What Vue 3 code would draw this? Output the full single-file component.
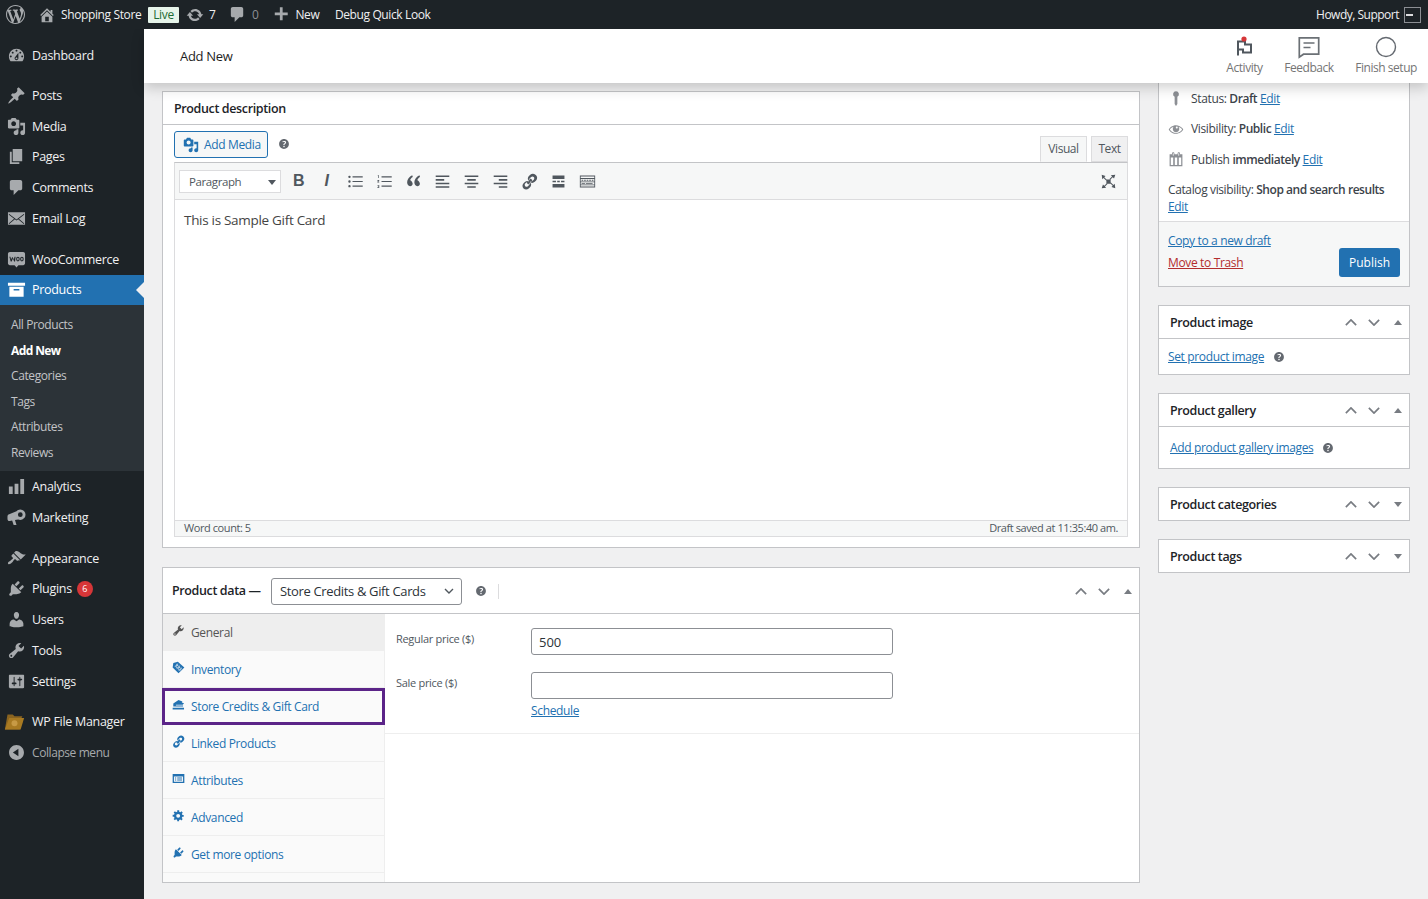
<template>
  <div class="page">
    <!-- Thanh admin trên cùng -->
    <header class="adminbar">
      <svg class="ab-wp" viewBox="0 0 20 20"><path :d="icons.wordpress" /></svg>
      <svg class="ab-home" viewBox="0 0 20 20"><path :d="icons.home" /></svg>
      <span class="ab-site">Shopping Store</span>
      <span class="ab-live">Live</span>
      <svg class="ab-update" viewBox="0 0 20 20"><path :d="icons.update" /></svg>
      <span class="ab-count">7</span>
      <svg class="ab-comment" viewBox="0 0 20 20"><path :d="icons.comments" /></svg>
      <span class="ab-zero">0</span>
      <svg class="ab-plus" viewBox="0 0 20 20"><path :d="icons.plus" /></svg>
      <span class="ab-new">New</span>
      <span class="ab-debug">Debug Quick Look</span>
      <span class="ab-howdy">Howdy, Support</span>
      <span class="ab-avatar"><i></i></span>
    </header>

    <div class="body-row">
      <!-- Menu bên trái -->
      <aside class="sidebar">
        <template v-for="item in menu" :key="item.label">
          <a class="menu-item" :class="[item.cls, { current: item.current, muted: item.muted }]">
            <span class="menu-icon">
              <svg v-if="item.icon" viewBox="0 0 20 20"><path :d="icons[item.icon]" fill-rule="evenodd" /></svg>
              <svg v-else class="folder" viewBox="0 0 24 20">
                <path d="M4 2h6l2 2h9l-1 2H22l-4 13H1z" fill="#8a6420" />
                <path d="M6 6h17l-4 13H1z" fill="#a87a22" />
                <circle cx="12" cy="12" r="3.4" fill="#c79a45" />
              </svg>
            </span>
            <span class="menu-label">{{ item.label }}</span>
            <span v-if="item.badge" class="menu-badge">{{ item.badge }}</span>
          </a>
          <ul v-if="item.current" class="submenu">
            <li v-for="sub in submenu" :key="sub" :class="{ active: sub === 'Add New' }">{{ sub }}</li>
          </ul>
        </template>
      </aside>

      <div class="main">
        <!-- Header trang -->
        <div class="wc-header">
          <span class="wc-title">Add New</span>
          <div class="wc-actions">
            <div class="wc-action activity">
              <svg viewBox="0 0 24 24">
                <path d="M6 20.500V6.500h7v3h6v8h-8v-3H7" fill="none" stroke="#50575e" stroke-width="2" />
                <circle cx="12" cy="4" r="2.600" fill="#d63638" />
              </svg>
              <span>Activity</span>
            </div>
            <div class="wc-action feedback">
              <svg viewBox="0 0 24 24">
                <path d="M2.300 2.800h19.400v16.400H6.500l-4.200 3z" fill="none" stroke="#6b7075" stroke-width="1.700" />
                <path d="M6.500 8h11M6.500 12.500h7" stroke="#6b7075" stroke-width="1.700" />
              </svg>
              <span>Feedback</span>
            </div>
            <div class="wc-action setup">
              <svg viewBox="0 0 24 24"><circle cx="12" cy="12" r="9.500" fill="none" stroke="#646970" stroke-width="1.400" /></svg>
              <span>Finish setup</span>
            </div>
          </div>
        </div>

        <div class="columns">
          <div class="col-left">
            <!-- Mô tả sản phẩm -->
            <section class="postbox description">
              <h2 class="box-title">Product description</h2>
              <div class="editor-wrap">
                <div class="media-row">
                  <button class="add-media">
                    <svg viewBox="0 0 20 20"><path :d="icons.media" /></svg>
                    Add Media
                  </button>
                  <svg class="help" viewBox="0 0 20 20"><path :d="icons.help" /></svg>
                  <div class="editor-tabs">
                    <span class="tab on">Visual</span>
                    <span class="tab text-tab">Text</span>
                  </div>
                </div>
                <div class="editor">
                  <div class="toolbar">
                    <div class="format-select">Paragraph<i class="caret"></i></div>
                    <span class="tb-btn tb-b">B</span>
                    <span class="tb-btn tb-i">I</span>
                    <span v-for="t in toolbarIcons" :key="t" class="tb-btn">
                      <svg viewBox="0 0 20 20"><path :d="tools[t]" fill-rule="evenodd" /></svg>
                    </span>
                    <span class="tb-btn tb-full">
                      <svg viewBox="0 0 20 20"><path :d="tools.fullscreen" /></svg>
                    </span>
                  </div>
                  <div class="editor-body">This is Sample Gift Card</div>
                  <div class="status-bar">
                    <span>Word count: 5</span>
                    <span>Draft saved at 11:35:40 am.</span>
                  </div>
                </div>
              </div>
            </section>

            <!-- Dữ liệu sản phẩm -->
            <section class="postbox product-data">
              <div class="pd-head">
                <span class="pd-title">Product data —</span>
                <div class="pd-select">
                  Store Credits &amp; Gift Cards
                  <svg viewBox="0 0 12 12"><path d="M2 4l4 4 4-4" fill="none" stroke="#50575e" stroke-width="1.400" /></svg>
                </div>
                <svg class="help" viewBox="0 0 20 20"><path :d="icons.help" /></svg>
                <i class="pd-divider"></i>
                <div class="box-arrows">
                  <svg viewBox="0 0 14 8"><path d="M1 7l6-6 6 6" /></svg>
                  <svg viewBox="0 0 14 8"><path d="M1 1l6 6 6-6" /></svg>
                  <b class="tri up"></b>
                </div>
              </div>
              <div class="pd-body">
                <ul class="pd-tabs">
                  <li v-for="tab in productTabs" :key="tab.label" :class="{ general: tab.general, mark: tab.mark }">
                    <svg viewBox="0 0 20 20"><path :d="tab.d" fill-rule="evenodd" /></svg>
                    <span>{{ tab.label }}</span>
                  </li>
                </ul>
                <div class="pd-panel">
                  <div class="fields">
                    <div class="field first">
                      <label>Regular price ($)</label>
                      <input type="text" value="500" />
                    </div>
                    <div class="field">
                      <label>Sale price ($)</label>
                      <input type="text" value="" />
                    </div>
                    <a class="link schedule">Schedule</a>
                  </div>
                </div>
              </div>
            </section>
          </div>

          <div class="col-right">
            <!-- Hộp xuất bản -->
            <section class="postbox publish">
              <div class="pub-rows">
                <div class="pub-row status">
                  <svg viewBox="0 0 20 20"><path :d="icons.pin" /></svg>
                  <span>Status: <b>Draft</b> <a class="link">Edit</a></span>
                </div>
                <div class="pub-row visibility">
                  <svg viewBox="0 0 20 20"><path :d="icons.eye" /></svg>
                  <span>Visibility: <b>Public</b> <a class="link">Edit</a></span>
                </div>
                <div class="pub-row schedule-row">
                  <svg viewBox="0 0 20 20"><path :d="icons.calendar" fill-rule="evenodd" /></svg>
                  <span>Publish <b>immediately</b> <a class="link">Edit</a></span>
                </div>
                <div class="catalog">Catalog visibility: <b>Shop and search results</b><br /><a class="link">Edit</a></div>
              </div>
              <div class="pub-actions">
                <div class="pub-links">
                  <a class="link">Copy to a new draft</a>
                  <a class="trash">Move to Trash</a>
                </div>
                <button class="publish-btn">Publish</button>
              </div>
            </section>

            <section v-for="box in sideBoxes" :key="box.title" class="postbox side-box">
              <div class="side-head">
                <h2>{{ box.title }}</h2>
                <div class="box-arrows">
                  <svg viewBox="0 0 14 8"><path d="M1 7l6-6 6 6" /></svg>
                  <svg viewBox="0 0 14 8"><path d="M1 1l6 6 6-6" /></svg>
                  <b class="tri" :class="box.link ? 'up' : 'down'"></b>
                </div>
              </div>
              <div v-if="box.link" class="side-body" :class="box.cls">
                <a class="link">{{ box.link }}</a>
                <svg class="help" viewBox="0 0 20 20"><path :d="icons.help" /></svg>
              </div>
            </section>
          </div>
        </div>
      </div>
    </div>
  </div>
</template>

<script setup>
//#region ICONS
const icons = {
  wordpress: 'M20 10c0-5.51-4.49-10-10-10C4.48 0 0 4.49 0 10c0 5.52 4.48 10 10 10 5.51 0 10-4.48 10-10zM7.78 15.37L4.37 6.22c.55-.02 1.17-.08 1.17-.08.5-.06.44-1.13-.06-1.11 0 0-1.45.11-2.37.11-.18 0-.37 0-.58-.01C4.12 2.69 6.87 1.11 10 1.11c2.33 0 4.45.87 6.05 2.34-.68-.11-1.65.39-1.65 1.58 0 .74.45 1.36.9 2.1.35.61.55 1.36.55 2.46 0 1.49-1.4 5-1.4 5l-3.03-8.37c.54-.02.82-.17.82-.17.5-.05.44-1.25-.06-1.22 0 0-1.44.12-2.38.12-.87 0-2.33-.12-2.33-.12-.5-.03-.56 1.2-.06 1.22l.92.08 1.26 3.41zM17.41 10c.24-.64.74-1.87.43-4.25.7 1.29 1.05 2.71 1.05 4.25 0 3.29-1.73 6.24-4.4 7.78.97-2.59 1.94-5.2 2.92-7.78zM6.1 18.09C3.12 16.65 1.11 13.53 1.11 10c0-1.3.23-2.48.72-3.59C3.25 10.3 4.67 14.2 6.1 18.09zm4.03-6.63l2.58 6.98c-.86.29-1.76.45-2.71.45-.79 0-1.57-.11-2.29-.33.81-2.38 1.62-4.74 2.42-7.1z',
  home: 'M16 8.5l1.53 1.53-1.06 1.06L10 4.62l-6.47 6.47-1.06-1.06L10 2.5l4 4v-2h2v4zm-6-2.46l6 5.99V18H4v-5.97zM12 17v-5H8v5h4z',
  update: 'M10.2 3.28c3.53 0 6.43 2.61 6.92 6h2.08l-3.5 4-3.5-4h2.32c-.45-1.97-2.21-3.45-4.32-3.45-1.45 0-2.73.71-3.54 1.78L4.95 5.66C6.23 4.2 8.11 3.28 10.2 3.28zm-.4 13.44c-3.52 0-6.43-2.61-6.92-6H.8l3.5-4c1.17 1.33 2.33 2.67 3.5 4H5.48c.45 1.97 2.21 3.45 4.32 3.45 1.45 0 2.73-.71 3.54-1.78l1.71 1.95c-1.28 1.46-3.15 2.38-5.25 2.38z',
  comments: 'M5 2h9c1.1 0 2 .9 2 2v7c0 1.1-.9 2-2 2h-2l-5 5v-5H5c-1.1 0-2-.9-2-2V4c0-1.1.9-2 2-2z',
  plus: 'M17 8v3h-5.5v5.5h-3V11H3V8h5.5V2.5h3V8z',
  dashboard: 'M3.76 16h12.48c1.1-1.37 1.76-3.11 1.76-5 0-4.42-3.58-8-8-8s-8 3.58-8 8c0 1.89.66 3.63 1.76 5zM10 4c.55 0 1 .45 1 1s-.45 1-1 1-1-.45-1-1 .45-1 1-1zM6 6c.55 0 1 .45 1 1s-.45 1-1 1-1-.45-1-1 .45-1 1-1zm8 0c.55 0 1 .45 1 1s-.45 1-1 1-1-.45-1-1 .45-1 1-1zm-5.37 5.55L12 7v6c0 1.1-.9 2-2 2s-2-.9-2-2c0-.57.24-1.08.63-1.45zM4 10c.55 0 1 .45 1 1s-.45 1-1 1-1-.45-1-1 .45-1 1-1zm12 0c.55 0 1 .45 1 1s-.45 1-1 1-1-.45-1-1 .45-1 1-1zm-5 3c0-.55-.45-1-1-1s-1 .45-1 1 .45 1 1 1 1-.45 1-1z',
  post: 'M10.44 3.02l1.82-1.82 6.36 6.35-1.83 1.82c-1.05-.68-2.48-.57-3.41.36l-.75.75c-.92.93-1.04 2.35-.35 3.41l-1.83 1.82-2.41-2.41-2.8 2.79c-.42.42-3.38 2.71-3.8 2.29s1.86-3.39 2.28-3.81l2.79-2.79L4.1 9.36l1.83-1.82c1.05.69 2.48.57 3.4-.36l.75-.75c.93-.92 1.05-2.35.36-3.41z',
  media: 'M13 11V4c0-.55-.45-1-1-1h-1.67L9 1H5L3.67 3H2c-.55 0-1 .45-1 1v7c0 .55.45 1 1 1h10c.55 0 1-.45 1-1zM7 4.5c1.38 0 2.5 1.12 2.5 2.5S8.38 9.5 7 9.5 4.5 8.38 4.5 7 5.62 4.5 7 4.5zM14 6h5v10.5c0 1.38-1.12 2.5-2.5 2.5S14 17.88 14 16.5s1.12-2.5 2.5-2.5c.17 0 .34.02.5.05V9h-3V6zm-4 8.05V13h2v3.5c0 1.38-1.12 2.5-2.5 2.5S7 17.88 7 16.5 8.12 14 9.5 14c.17 0 .34.02.5.05z',
  page: 'M6 15V2h10v13H6zm-1 1h8v2H3V5h2v11z',
  email: 'M1 3.500h18v13H1zM2 5l8 6 8-6v1l-5.500 4.300L18 15v1l-6.300-5.100L10 12.200l-1.700-1.300L2 16v-1l5.500-4.700L2 6z',
  woo: 'M3 2h14c1.100 0 2 .9 2 2v10c0 1.100-.9 2-2 2h-5l-2 2.500L8 16H3c-1.100 0-2-.9-2-2V4c0-1.100.9-2 2-2zM2.500 7l1.400 5h1l1.300-3 1.300 3h1L9 7H8l-.8 3L6 7.500h-.6L4.300 10l-.7-3zM11.500 7a1.900 2.600 0 100 5.200 1.900 2.600 0 000-5.200zm0 1.200a.8 1.400 0 110 2.800.8 1.400 0 010-2.800zM15.700 7a1.900 2.600 0 100 5.200 1.900 2.600 0 000-5.200zm0 1.200a.8 1.400 0 110 2.800.8 1.400 0 010-2.800z',
  archive: 'M1 3h18v3H1zM2.500 7h15v10.500h-15zM7 9.500v1.500h6V9.500z',
  analytics: 'M18 18V2h-4v16h4zm-6 0V7H8v11h4zm-6 0v-8H2v8h4z',
  marketing: 'M14 1.500a5.500 5.500 0 110 11c-.8 0-1.500-.2-2.200-.5L8.400 12.700 10 18H7l-1.600-4.800L3 13.700C1.600 14 .5 13 .5 11.500V9c0-1.200.7-2 1.800-2.300L10 3.500c1-1.200 2.400-2 4-2zm0 3a2.500 2.500 0 100 5 2.500 2.500 0 000-5z',
  appearance: 'M14.480 11.060L7.410 3.990l1.500-1.500c.5-.56 2.300-.47 3.510.32 1.210.8 1.430 1.280 2.910 2.100 1.180.64 2.450 1.260 4.450.85zm-.71.71L6.700 4.700 4.930 6.470c-.39.39-.39 1.020 0 1.410l1.060 1.060c.39.39.39 1.030 0 1.420-.6.6-1.430 1.110-2.210 1.690-.35.26-.7.53-1.010.84C1.430 13.230.4 14.890 1.300 15.780c.89.89 2.550-.13 3.900-1.470.31-.31.58-.66.85-1.010.57-.78 1.080-1.610 1.690-2.210.39-.39 1.020-.39 1.410 0l1.060 1.060c.39.39 1.020.39 1.410 0z',
  plugins: 'M13.110 4.360L9.870 7.600 8 5.730l3.240-3.240c.35-.34 1.050-.2 1.560.32.52.51.66 1.210.31 1.550zm-8 1.770l.91-1.120 9.010 9.010-1.190.84c-.71.71-2.630 1.160-3.820 1.160H6.140L4.900 17.260c-.59.59-1.540.59-2.120 0-.59-.58-.59-1.530 0-2.120l1.240-1.240v-3.880c0-1.130.4-3.190 1.090-3.890zm7.260 3.970l3.240-3.240c.34-.35 1.040-.21 1.550.31.52.51.66 1.210.31 1.550l-3.240 3.250z',
  users: 'M10 9.250c-2.270 0-2.730-3.440-2.730-3.440C7 4.020 7.820 2 9.970 2c2.160 0 2.980 2.020 2.710 3.810 0 0-.41 3.440-2.680 3.440zm0 2.570L12.720 10c2.390 0 4.520 2.330 4.520 4.530v2.490s-3.650 1.130-7.240 1.130c-3.650 0-7.240-1.130-7.240-1.130v-2.490c0-2.250 1.940-4.480 4.470-4.480z',
  tools: 'M16.680 9.770c-1.340 1.340-3.300 1.670-4.950.99l-5.410 6.520c-.99.99-2.590.99-3.580 0s-.99-2.590 0-3.570l6.520-5.420c-.68-1.650-.35-3.610.99-4.950 1.280-1.280 3.120-1.620 4.720-1.060l-2.890 2.890 2.820 2.820 2.860-2.870c.53 1.580.18 3.390-1.080 4.650zM3.810 16.210c.4.39 1.040.39 1.430 0 .4-.4.4-1.040 0-1.430-.39-.4-1.030-.4-1.430 0-.39.39-.39 1.030 0 1.430z',
  settings: 'M18 16V4c0-.55-.45-1-1-1H3c-.55 0-1 .45-1 1v12c0 .55.45 1 1 1h14c.55 0 1-.45 1-1zM8 11h1c.55 0 1 .45 1 1s-.45 1-1 1H8v1.500c0 .28-.22.5-.5.5s-.5-.22-.5-.5V13H6c-.55 0-1-.45-1-1s.45-1 1-1h1V5.500c0-.28.22-.5.5-.5s.5.22.5.5V11zm5-2h-1c-.55 0-1-.45-1-1s.45-1 1-1h1V5.500c0-.28.22-.5.5-.5s.5.22.5.5V7h1c.55 0 1 .45 1 1s-.45 1-1 1h-1v5.500c0 .28-.22.5-.5.5s-.5-.22-.5-.5V9z',
  collapse: 'M10 2.160c4.330 0 7.840 3.510 7.840 7.840s-3.510 7.840-7.840 7.840S2.160 14.330 2.160 10 5.710 2.160 10 2.160zm2 11.720V6.120L6.180 9.970z',
  help: 'M17 10c0-3.870-3.140-7-7-7-3.870 0-7 3.130-7 7 0 3.860 3.130 7 7 7 3.860 0 7-3.140 7-7zm-6.300 1.480H9.140v-.43c0-.38.08-.7.24-.98s.46-.57.88-.89c.41-.29.68-.53.81-.71.14-.18.2-.39.2-.62 0-.25-.09-.44-.28-.58-.19-.13-.45-.19-.79-.19-.58 0-1.250.19-2 .57l-.64-1.280c.87-.49 1.800-.74 2.770-.74.81 0 1.450.2 1.920.58.48.39.71.91.71 1.550 0 .43-.09.8-.29 1.110-.19.32-.57.67-1.110 1.060-.38.28-.61.49-.71.63-.1.15-.15.34-.15.57v.35zm-1.470 2.740c-.18-.17-.27-.42-.27-.73 0-.33.08-.58.26-.75s.43-.25.77-.25c.32 0 .57.09.75.26s.27.42.27.74c0 .3-.09.55-.27.72-.18.18-.43.27-.75.27-.33 0-.58-.09-.76-.26z',
  pin: 'M10 1.500a3.600 3.600 0 011.700 6.800v9.200L10 20l-1.700-2.500V8.300A3.600 3.600 0 0110 1.500z',
  eye: 'M18.300 9.500C15 4.900 8.500 3.800 3.900 7.200c-1.200.9-2.200 2.100-3 3.400.2.4.5.8.8 1.200 3.300 4.600 9.600 5.600 14.200 2.400.9-.7 1.800-1.500 2.400-2.400.3-.4.5-.8.8-1.200-.2-.4-.5-.7-.8-1.100zm-8.200-2.300c.5-.5 1.300-.5 1.800 0s.5 1.300 0 1.800-1.300.5-1.800 0-.5-1.300 0-1.800zm-.1 7.700c-3.100 0-6-1.600-7.700-4.200C3.500 9 5.100 7.800 7 7.200c-.7.8-1 1.700-1 2.700 0 2.200 1.700 4.100 4 4.100 2.200 0 4.100-1.700 4.100-4v-.1c0-1-.4-2-1.100-2.700 1.900.6 3.500 1.800 4.700 3.500-1.700 2.600-4.600 4.200-7.700 4.200z',
  calendar: 'M15 4h3v15H2V4h3V3c0-.41.15-.76.44-1.060.29-.29.65-.44 1.060-.44s.77.15 1.060.44c.29.3.44.65.44 1.060v1h4V3c0-.41.15-.76.44-1.060.29-.29.65-.44 1.060-.44s.77.15 1.060.44c.29.3.44.65.44 1.060v1zM6 3v2.500a.5.5 0 001 0V3a.5.5 0 00-1 0zm7 0v2.500a.5.5 0 001 0V3a.5.5 0 00-1 0zM3.500 8v9.500h3V8zM8.500 8v9.500h3V8zM13.500 8v9.500h3V8z',
}

const tools = {
  bullist: 'M1.500 4.500a1.400 1.400 0 102.800 0 1.400 1.400 0 00-2.800 0zM1.500 10a1.400 1.400 0 102.800 0 1.400 1.400 0 00-2.800 0zM1.500 15.500a1.400 1.400 0 102.800 0 1.400 1.400 0 00-2.800 0zM6.500 3.800h12v1.400h-12zM6.500 9.300h12v1.400h-12zM6.500 14.800h12v1.400h-12z',
  numlist: 'M2 2.500h1.500v3.500H2.700V3.300H2zM1.600 8.300h2.200v.8l-1.200 1.200h1.200v.8H1.600v-.8l1.200-1.200H1.600zM1.600 14h2.200v3.600H1.600v-.7h1.400v-.8H2.200v-.6h.8v-.8H1.600zM6.500 3.800h12v1.400h-12zM6.500 9.300h12v1.400h-12zM6.500 14.800h12v1.400h-12z',
  quote: 'M7.400 9.300c-.4-.4-.8-.6-1.300-.7.2-1.800 1.500-3.200 3.100-4L8.500 2.500C5 4 2.500 7.300 2.500 11c0 2.600 1.500 4.500 3.500 4.500 1.700 0 3-1.300 3-3 0-1.200-.9-2.400-1.600-3.200zM15.900 9.300c-.4-.4-.8-.6-1.300-.7.2-1.800 1.500-3.200 3.100-4l-.7-2.100C13.500 4 11 7.300 11 11c0 2.600 1.500 4.500 3.500 4.500 1.700 0 3-1.300 3-3 0-1.200-.9-2.400-1.600-3.200z',
  alignleft: 'M2 3h16v1.800H2zM2 7.200h10V9H2zM2 11.400h16v1.800H2zM2 15.600h16v1.800H2z',
  aligncenter: 'M2 3h16v1.800H2zM5 7.200h10V9H5zM2 11.400h16v1.800H2zM5 15.600h10v1.800H5z',
  alignright: 'M2 3h16v1.800H2zM8 7.200h10V9H8zM2 11.400h16v1.800H2zM8 15.600h10v1.800H8z',
  link: 'M17.740 2.760c1.680 1.690 1.680 4.410 0 6.100l-1.530 1.520c-1.120 1.120-2.700 1.510-4.130 1.170l-1.500-1.500.040-.050c.960.300 2.050.110 2.840-.680l1.530-1.520c.840-.840.840-2.210 0-3.050-.850-.840-2.210-.840-3.050 0l-1.530 1.530c-.780.790-.980 1.870-.680 2.840l-.050.040-1.500-1.500c-.340-1.430.050-3 1.170-4.130l1.530-1.530c1.680-1.680 4.410-1.680 6.100 0zM8.590 13.440l4.850-4.850-2.030-2.030-4.850 4.850zM9.420 10.240l-.050.040c-.960-.300-2.050-.110-2.840.680L5 12.490c-.840.840-.840 2.210 0 3.050.850.840 2.210.840 3.050 0l1.530-1.530c.780-.790.980-1.870.680-2.840l.050-.040 1.500 1.500c.340 1.430-.050 3-1.170 4.130l-1.530 1.530c-1.680 1.680-4.410 1.680-6.100 0s-1.680-4.410 0-6.100l1.530-1.520c1.120-1.120 2.700-1.510 4.130-1.170z',
  more: 'M3 3h14v4H3zM3 9h4v2H3zM8.500 9h3v2h-3zM13 9h4v2h-4zM3 13h14v4H3z',
  kitchen: 'M1 3h18v14H1zM2 4v2h16V4zM2 7v3h16V7zM2 11v2.500h16V11zM2 14.500V16h16v-1.500zM3 8h2v1H3zM6 8h2v1H6zM9 8h2v1H9zM12 8h2v1h-2zM15 8h2v1h-2zM3 12h4v.8H3zM8 12h8v.8H8z',
  fullscreen: 'M7.500 7.500h5v5h-5zM2 2l4.500 1.500L5 5l3 3-.8.800-3-3L2.700 7.300zM18 2l-1.500 4.500L15 5l-3 3-.8-.8 3-3-1.500-1.500zM2 18l1.500-4.500L5 15l3-3 .8.800-3 3 1.500 1.500zM18 18l-4.500-1.500L15 15l-3-3 .8-.8 3 3 1.500-1.500z',
}
//#endregion

//#region DATA
const menu = [
  { label: 'Dashboard', icon: 'dashboard' },
  { label: 'Posts', icon: 'post', cls: 'sep-posts' },
  { label: 'Media', icon: 'media' },
  { label: 'Pages', icon: 'page' },
  { label: 'Comments', icon: 'comments' },
  { label: 'Email Log', icon: 'email' },
  { label: 'WooCommerce', icon: 'woo', cls: 'sep-woo' },
  { label: 'Products', icon: 'archive', current: true },
  { label: 'Analytics', icon: 'analytics' },
  { label: 'Marketing', icon: 'marketing' },
  { label: 'Appearance', icon: 'appearance', cls: 'sep-app' },
  { label: 'Plugins', icon: 'plugins', badge: 6 },
  { label: 'Users', icon: 'users' },
  { label: 'Tools', icon: 'tools' },
  { label: 'Settings', icon: 'settings' },
  { label: 'WP File Manager', icon: null, cls: 'sep-file' },
  { label: 'Collapse menu', icon: 'collapse', muted: true },
]

const submenu = ['All Products', 'Add New', 'Categories', 'Tags', 'Attributes', 'Reviews']

const toolbarIcons = ['bullist', 'numlist', 'quote', 'alignleft', 'aligncenter', 'alignright', 'link', 'more', 'kitchen']

const productTabs = [
  { label: 'General', general: true, d: icons.tools },
  { label: 'Inventory', d: 'M9 1l10 9-9 9-9-9 1-7zM6 5l8 8 .7-.7-8-8zM4.500 7.500l8 8 .7-.7-8-8zM9 4l-5 5 .7.7 5-5zM12 7l-5 5 .7.7 5-5zM15 10l-5 5 .7.7 5-5z' },
  { label: 'Store Credits & Gift Card', mark: true, d: 'M2 8.500l8-5.500 6 2.500-1 1.500 3.500 1-2 2.500H6v1h11v1.500H2zM1 15h17.500v2.500H1z' },
  { label: 'Linked Products', d: tools.link },
  { label: 'Attributes', d: 'M1 3h18v14H1zM3 7v8h14V7zM4.500 8.500h2V10h-2zM8 8.500h7.500V10H8zM4.500 11.500h2V13h-2zM8 11.500h7.500V13H8z' },
  { label: 'Advanced', d: 'M18 12h-2.180c-.170.700-.470 1.350-.870 1.920l1.540 1.540-2.100 2.100-1.540-1.540c-.570.400-1.220.700-1.920.870V19H8v-2.180c-.700-.170-1.350-.470-1.920-.870l-1.540 1.540-2.100-2.100 1.540-1.540c-.400-.570-.700-1.220-.870-1.920H1V9h2.180c.170-.700.470-1.350.870-1.920L2.510 5.540l2.100-2.100 1.540 1.540c.570-.400 1.220-.700 1.920-.870V2h3v2.180c.700.170 1.350.470 1.920.870l1.540-1.540 2.100 2.100-1.540 1.540c.400.570.700 1.220.870 1.920H18zM9.500 13.500a3 3 0 100-6 3 3 0 000 6z' },
  { label: 'Get more options', d: icons.plugins },
]

const sideBoxes = [
  { title: 'Product image', link: 'Set product image', cls: 'image' },
  { title: 'Product gallery', link: 'Add product gallery images', cls: 'gallery' },
  { title: 'Product categories' },
  { title: 'Product tags' },
]
//#endregion
</script>

<style>
html, body { margin: 0; background: #f0f0f1; }
</style>

<style scoped>
.page {
  width: 1428px;
  height: 899px;
  overflow: hidden;
  display: flex;
  flex-direction: column;
  background: #f0f0f1;
  font-family: "Open Sans", "Liberation Sans", sans-serif;
  font-size: 12px;
  letter-spacing: -0.35px;
  color: #3c434a;
}

/* Admin bar */
.adminbar {
  height: 29px;
  flex: none;
  background: #1d2327;
  display: flex;
  align-items: center;
  color: #f0f0f1;
  font-size: 12px;
  letter-spacing: -0.38px;
  position: relative;
  z-index: 5;
}
.adminbar svg { fill: #a7aaad; flex: none; }
.ab-wp { width: 19px; height: 19px; margin-left: 6px; }
.ab-home { width: 18px; height: 18px; margin-left: 13px; }
.ab-site { margin-left: 5px; width: 81px; white-space: nowrap; }
.ab-live {
  margin-left: 6px;
  width: 31px;
  height: 16px;
  line-height: 16px;
  text-align: center;
  background: #e6f4ea;
  color: #1e6b34;
  border-radius: 1px;
}
.ab-update { width: 18px; height: 18px; margin-left: 7px; }
.ab-count { margin-left: 5px; }
.ab-comment { width: 19px; height: 19px; margin-left: 12.5px; }
.ab-zero { margin-left: 5px; color: #8c8f94; }
.ab-plus { width: 18.5px; height: 18.5px; margin-left: 14px; }
.ab-new { margin-left: 4.5px; }
.ab-debug { margin-left: 15.5px; }
.ab-howdy { margin-left: auto; letter-spacing: -0.5px; }
.ab-avatar {
  width: 14px;
  height: 14px;
  margin: 0 7px 0 5px;
  border: 1px solid #8c8f94;
  display: flex;
  align-items: center;
  padding-left: 1px;
}
.ab-avatar i { width: 7px; height: 2px; background: #dcdcde; }

.body-row { flex: 1; display: flex; min-height: 0; }

/* Sidebar */
.sidebar {
  width: 144px;
  flex: none;
  background: #1d2327;
  padding-top: 11px;
  color: #f0f0f1;
}
.menu-item {
  display: flex;
  align-items: center;
  height: 30.75px;
  position: relative;
  font-size: 12.5px;
  letter-spacing: -0.3px;
}
.sep-posts { margin-top: 9.25px; }
.sep-woo { margin-top: 10.25px; }
.sep-app { margin-top: 10.25px; }
.sep-file { margin-top: 9.75px; }
.menu-icon {
  width: 32px;
  display: flex;
  justify-content: center;
  flex: none;
}
.menu-icon svg { width: 19px; height: 19px; fill: #a7aaad; }
.menu-icon svg.folder { width: 21px; height: 19px; margin-left: -3px; }
.menu-label { white-space: nowrap; }
.menu-item.muted .menu-label { color: #a7aaad; font-size: 12px; letter-spacing: -0.42px; }
.menu-badge {
  margin-left: 5px;
  width: 16px;
  height: 16px;
  line-height: 16px;
  border-radius: 50%;
  background: #d63638;
  color: #fff;
  font-size: 9px;
  letter-spacing: 0;
  text-align: center;
}
.menu-item.current { background: #2271b1; color: #fff; height: 30.25px; }
.menu-item.current svg { fill: #fff; }
.menu-item.current::after {
  content: "";
  position: absolute;
  right: 0;
  top: 50%;
  margin-top: -8px;
  border: 8px solid transparent;
  border-right-color: #f0f0f1;
  border-left-width: 0;
}
.submenu {
  list-style: none;
  margin: 0;
  padding: 7px 0 6px;
  background: #2c3338;
  color: #c3c4c7;
  font-size: 12px;
  letter-spacing: -0.4px;
}
.submenu li {
  height: 25.5px;
  line-height: 25.5px;
  padding-left: 11px;
}
.submenu li.active { color: #fff; font-weight: 700; letter-spacing: -0.6px; }

/* Main */
.main { flex: 1; min-width: 0; display: flex; flex-direction: column; }
.wc-header {
  height: 54px;
  flex: none;
  background: #fff;
  display: flex;
  align-items: center;
  justify-content: space-between;
  padding-left: 36px;
  box-shadow: 0 5px 12px rgba(0, 0, 0, .18);
  position: relative;
  z-index: 3;
}
.wc-title { font-size: 13px; letter-spacing: -0.3px; color: #1e1e1e; }
.wc-actions { display: flex; height: 100%; padding-right: 11px; gap: 21.5px; }
.wc-action {
  display: flex;
  flex-direction: column;
  align-items: center;
  padding-top: 6px;
  color: #757575;
  font-size: 12px;
  letter-spacing: -0.45px;
}
.wc-action svg { width: 24px; height: 24px; margin-bottom: 0; }

.columns {
  flex: 1;
  display: flex;
  gap: 18px;
  padding: 8px 18px 0;
  min-height: 0;
}
.col-left { width: 978px; flex: none; }
.col-right { width: 252px; flex: none; margin-top: -8px; }

.postbox {
  background: #fff;
  border: 1px solid #c3c4c7;
  box-sizing: border-box;
}

/* Description */
.description { height: 457px; }
.box-title {
  margin: 0;
  height: 33px;
  box-sizing: border-box;
  padding-left: 11px;
  line-height: 33px;
  font-size: 12.5px;
  font-weight: 600;
  letter-spacing: -0.37px;
  color: #1d2327;
  border-bottom: 1px solid #c3c4c7;
}
.editor-wrap { padding: 6px 11px 0; }
.media-row { height: 31px; display: flex; align-items: flex-start; position: relative; }
.add-media {
  width: 94px;
  height: 27px;
  box-sizing: border-box;
  background: #f6f7f7;
  border: 1px solid #2271b1;
  border-radius: 3px;
  color: #2271b1;
  font: inherit;
  letter-spacing: -0.35px;
  display: flex;
  align-items: center;
  gap: 5px;
  padding: 0 0 0 8px;
  white-space: nowrap;
}
.add-media svg { width: 16px; height: 16px; fill: #2271b1; }
.help { width: 14px; height: 14px; fill: #646970; flex: none; }
.media-row .help { margin: 6px 0 0 9px; }
.editor-tabs {
  margin-left: auto;
  display: flex;
  gap: 4px;
  margin-top: 5px;
  height: 26px;
  align-self: flex-start;
}
.tab {
  box-sizing: border-box;
  width: 47px;
  height: 26px;
  line-height: 24px;
  text-align: center;
  background: #f0f0f1;
  border: 1px solid #dcdcde;
  color: #50575e;
  font-size: 12px;
  letter-spacing: -0.45px;
}
.text-tab { width: 37px; }
.tab.on { background: #f6f7f7; border-bottom-color: #f6f7f7; }
.editor { border: 1px solid #dcdcde; border-top-color: #c3c4c7; }
.toolbar {
  height: 37px;
  box-sizing: border-box;
  background: #f6f7f7;
  border-bottom: 1px solid #dcdcde;
  display: flex;
  align-items: center;
  padding-left: 4px;
  position: relative;
}
.format-select {
  width: 102px;
  height: 23px;
  box-sizing: border-box;
  background: #fff;
  border: 1px solid #dcdcde;
  line-height: 21px;
  padding-left: 9px;
  margin-right: 2px;
  color: #50575e;
  font-size: 11.5px;
  letter-spacing: -0.4px;
  position: relative;
}
.caret {
  position: absolute;
  right: 4px;
  top: 9px;
  border: 4px solid transparent;
  border-top: 5px solid #50575e;
  border-bottom: 0;
}
.tb-btn {
  width: 29px;
  height: 24px;
  display: flex;
  align-items: center;
  justify-content: center;
  color: #50575e;
  flex: none;
}
.tb-btn svg { width: 17px; height: 17px; fill: #50575e; }
.tb-b { font: 700 16px "Liberation Sans", sans-serif; margin-left: 1px; }
.tb-i { font: italic 700 16px "Liberation Sans", sans-serif; margin-left: -1px; }
.tb-full { position: absolute; right: 4px; }
.editor-body {
  height: 320px;
  box-sizing: border-box;
  padding: 11px 9px;
  background: #fff;
  color: #444;
  font-size: 13.5px;
  letter-spacing: -0.3px;
  line-height: 18px;
}
.status-bar {
  height: 16px;
  box-sizing: border-box;
  border-top: 1px solid #dcdcde;
  background: #f6f7f7;
  display: flex;
  justify-content: space-between;
  padding: 0 9px;
  font-size: 11px;
  letter-spacing: -0.42px;
  line-height: 13px;
  color: #50575e;
}

/* Product data */
.product-data { margin-top: 19px; height: 316px; }
.pd-head {
  height: 46px;
  box-sizing: border-box;
  border-bottom: 1px solid #c3c4c7;
  display: flex;
  align-items: center;
  padding-left: 9px;
  padding-top: 1px;
}
.pd-title {
  font-size: 12.5px;
  font-weight: 600;
  letter-spacing: -0.37px;
  color: #1d2327;
  width: 99px;
  white-space: nowrap;
  margin-top: -2px;
}
.pd-select {
  width: 191px;
  height: 27px;
  box-sizing: border-box;
  border: 1px solid #8c8f94;
  border-radius: 3px;
  display: flex;
  align-items: center;
  justify-content: space-between;
  padding: 0 6px 0 8px;
  font-size: 13px;
  letter-spacing: -0.35px;
  color: #2c3338;
  white-space: nowrap;
}
.pd-select svg { width: 12px; height: 12px; }
.pd-head .help { margin-left: 12px; }
.pd-divider { width: 1px; height: 15px; background: #dcdcde; margin-left: 10px; }
.box-arrows {
  margin-left: auto;
  display: flex;
  align-items: center;
  padding-right: 7px;
}
.box-arrows svg {
  width: 12px;
  height: 7px;
  margin-right: 11px;
  fill: none;
  stroke: #787c82;
  stroke-width: 2;
}
.box-arrows svg + svg { margin-right: 12px; }
.tri { width: 0; height: 0; border-left: 4px solid transparent; border-right: 4px solid transparent; margin-left: 2px; }
.tri.up { border-bottom: 5px solid #787c82; }
.tri.down { border-top: 5px solid #787c82; }

.pd-body { display: flex; height: 268px; }
.pd-tabs {
  list-style: none;
  margin: 0;
  padding: 0;
  width: 222px;
  flex: none;
  background: #fafafa;
  border-right: 1px solid #eee;
  box-sizing: border-box;
}
.pd-tabs li {
  height: 37px;
  box-sizing: border-box;
  border-bottom: 1px solid #eee;
  display: flex;
  align-items: center;
  padding-left: 9px;
  color: #2271b1;
  font-size: 12px;
  letter-spacing: -0.36px;
}
.pd-tabs li svg { width: 13px; height: 13px; fill: #2271b1; margin-right: 6px; margin-top: -4px; flex: none; }
.pd-tabs li.general { background: #eee; color: #555; border-bottom: 0; }
.pd-tabs li.general svg { fill: #555; }
.pd-tabs li.mark {
  margin-left: -1px;
  padding-left: 10px;
  width: 223px;
  outline: 3px solid #5b2488;
  outline-offset: -3px;
}
.pd-panel { flex: 1; background: #fff; }
.fields {
  height: 120px;
  box-sizing: border-box;
  border-bottom: 1px solid #eee;
  padding: 14px 0 0 11px;
  position: relative;
}
.field { display: flex; height: 44px; align-items: flex-start; }
.field label { width: 135px; padding-top: 3px; font-size: 11px; letter-spacing: -0.3px; color: #50575e; white-space: nowrap; }
.field input {
  width: 362px;
  height: 27px;
  box-sizing: border-box;
  border: 1px solid #8c8f94;
  border-radius: 3px;
  padding: 0 7px;
  font: inherit;
  font-size: 13px;
  color: #2c3338;
  background: #fff;
}
.schedule { display: block; margin: -14px 0 0 135px; }

.link { color: #2271b1; text-decoration: underline; }

/* Publish */
.publish { height: 204px; border-top: 0; display: flex; flex-direction: column; }
.pub-rows { flex: 1; padding: 0 9px; }
.pub-row { display: flex; align-items: center; height: 30.5px; }
.pub-row svg { width: 16px; height: 16px; fill: #8c8f94; flex: none; margin-right: 7px; }
.pub-row b, .catalog b { font-weight: 600; letter-spacing: -0.45px; }
.catalog { line-height: 17px; padding-top: 6px; letter-spacing: -0.38px; white-space: nowrap; }
.pub-actions {
  height: 65px;
  flex: none;
  box-sizing: border-box;
  border-top: 1px solid #dcdcde;
  background: #f6f7f7;
  display: flex;
  justify-content: space-between;
  padding: 9px 9px 0;
}
.pub-links { display: flex; flex-direction: column; gap: 5px; line-height: 17px; padding-top: 1px; }
.trash { color: #b32d2e; text-decoration: underline; }
.publish-btn {
  width: 61px;
  height: 29px;
  margin-top: 17px;
  background: #2271b1;
  border: 0;
  border-radius: 3px;
  color: #fff;
  font: inherit;
}

/* Side boxes */
.side-box { margin-top: 18px; }
.side-head {
  height: 32px;
  display: flex;
  align-items: center;
  padding-left: 11px;
}
.side-head h2 { margin: 0; font-size: 12.5px; font-weight: 600; letter-spacing: -0.37px; color: #1d2327; white-space: nowrap; }
.side-body {
  border-top: 1px solid #c3c4c7;
  display: flex;
  align-items: center;
  gap: 7.5px;
  padding-left: 9px;
}
.side-body.image { height: 35px; }
.side-body.gallery { height: 41px; padding-left: 11px; }
</style>
